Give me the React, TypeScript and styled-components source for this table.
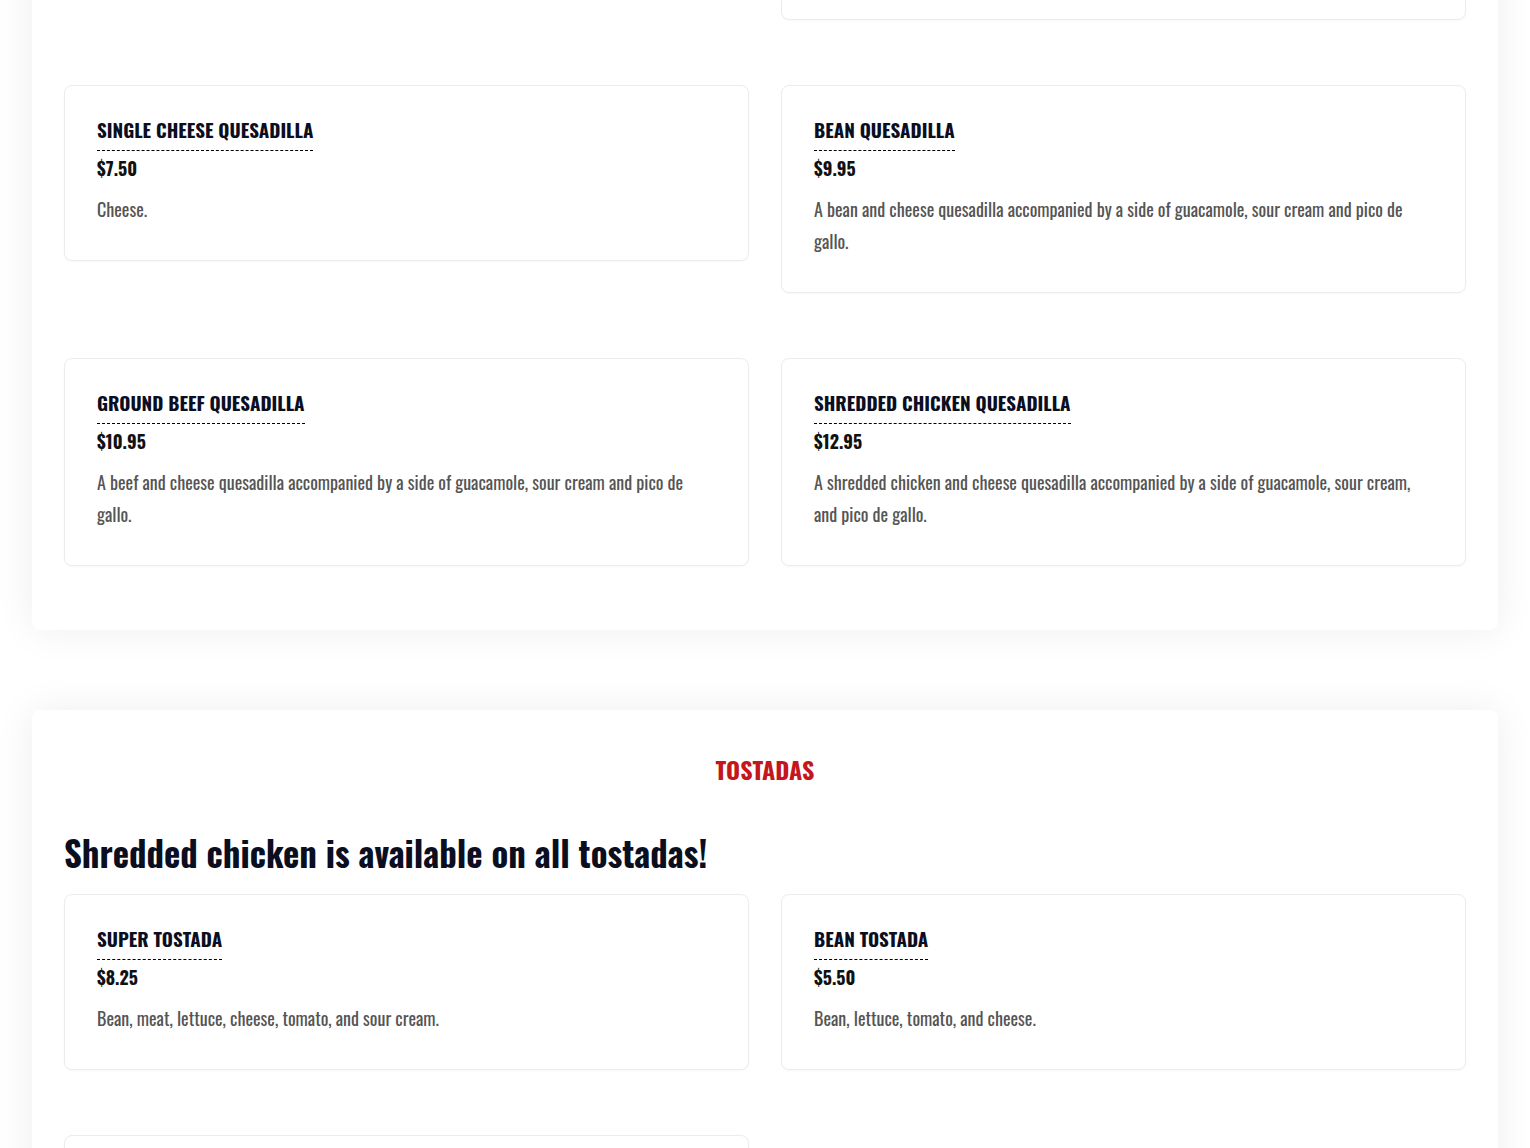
import styled, { createGlobalStyle } from 'styled-components';

const GlobalStyle = createGlobalStyle`
  html, body {
    margin: 0;
    padding: 0;
    background: #ffffff;
  }
  body {
    font-family: 'Oswald', 'Roboto Condensed', 'Liberation Sans Narrow', 'DejaVu Sans Condensed', sans-serif;
    -webkit-font-smoothing: antialiased;
  }
`;

// the page is shown scrolled part way down the menu
const Page = styled.main`
  display: flex;
  flex-direction: column;
  gap: 80px;
  padding: 0 32px 40px;
  margin-top: -252px;
`;

const Panel = styled.section<{ $top?: number }>`
  background: #fff;
  border-radius: 8px;
  padding: ${({ $top }) => $top ?? 64}px 32px 64px;
  box-shadow: 0 0 40px rgba(0, 0, 0, 0.07);
`;

const Category = styled.h2`
  margin: 0;
  text-align: center;
  color: #c4161c;
  font-size: 24px;
  line-height: 30px;
  font-weight: 700;
  text-transform: uppercase;
`;

const Note = styled.h3`
  margin: 48px 0 20px;
  color: #0b0e1f;
  font-size: 34.7px;
  line-height: 42px;
  font-weight: 700;
`;

const Grid = styled.div`
  display: grid;
  grid-template-columns: 1fr 1fr;
  column-gap: 32px;
  row-gap: 65px;
  align-items: start;
`;

const Card = styled.article`
  background: #fff;
  border: 1px solid #ececec;
  border-radius: 8px;
  padding: 32px 32px 35px;
  box-shadow: 0 1px 2px rgba(0, 0, 0, 0.03);
`;

const Title = styled.h4`
  display: inline-block;
  margin: 0;
  padding-bottom: 10px;
  border-bottom: 1px dashed #000;
  color: #0b0e1f;
  font-size: 19px;
  line-height: 22px;
  font-weight: 700;
  text-transform: uppercase;
`;

const Price = styled.div`
  margin-top: 1px;
  color: #111;
  font-size: 18px;
  line-height: 32px;
  font-weight: 700;
`;

const Desc = styled.p`
  margin: 9px 0 0;
  color: #555;
  font-size: 18px;
  line-height: 32px;
  font-weight: 400;
`;

type Item = { name: string; price: string; desc: string };

const quesadillas: Item[] = [
  { name: 'Cheese Quesadilla', price: '$8.50', desc: 'Cheese.' },
  {
    name: 'Super Quesadilla',
    price: '$13.95',
    desc: 'A meat and cheese quesadilla accompanied by a side of guacamole, sour cream and pico de gallo.',
  },
  { name: 'Single Cheese Quesadilla', price: '$7.50', desc: 'Cheese.' },
  {
    name: 'Bean Quesadilla',
    price: '$9.95',
    desc: 'A bean and cheese quesadilla accompanied by a side of guacamole, sour cream and pico de gallo.',
  },
  {
    name: 'Ground Beef Quesadilla',
    price: '$10.95',
    desc: 'A beef and cheese quesadilla accompanied by a side of guacamole, sour cream and pico de gallo.',
  },
  {
    name: 'Shredded Chicken Quesadilla',
    price: '$12.95',
    desc: 'A shredded chicken and cheese quesadilla accompanied by a side of guacamole, sour cream, and pico de gallo.',
  },
];

const tostadas: Item[] = [
  { name: 'Super Tostada', price: '$8.25', desc: 'Bean, meat, lettuce, cheese, tomato, and sour cream.' },
  { name: 'Bean Tostada', price: '$5.50', desc: 'Bean, lettuce, tomato, and cheese.' },
  { name: 'Meat Tostada', price: '$6.95', desc: 'Meat, lettuce, tomato, and cheese.' },
];

const MenuCard = ({ item }: { item: Item }) => (
  <Card>
    <Title>{item.name}</Title>
    <Price>{item.price}</Price>
    <Desc>{item.desc}</Desc>
  </Card>
);

export default function App() {
  return (
    <>
      <GlobalStyle />
      <Page>
        <Panel>
          <Grid>
            {quesadillas.map((item) => (
              <MenuCard key={item.name} item={item} />
            ))}
          </Grid>
        </Panel>
        <Panel $top={44}>
          <Category>Tostadas</Category>
          <Note>Shredded chicken is available on all tostadas!</Note>
          <Grid>
            {tostadas.map((item) => (
              <MenuCard key={item.name} item={item} />
            ))}
          </Grid>
        </Panel>
      </Page>
    </>
  );
}
